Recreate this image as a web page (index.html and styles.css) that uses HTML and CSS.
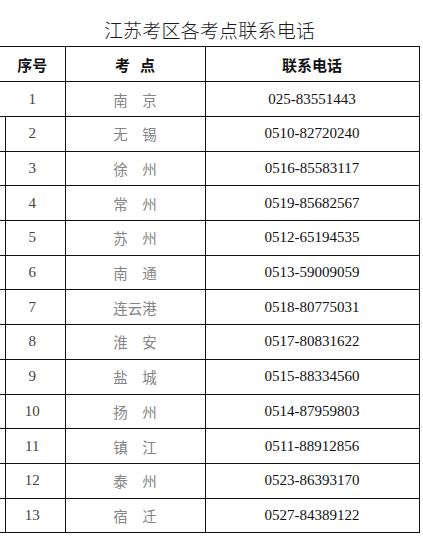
FILE: index.html
```html
<!DOCTYPE html>
<html lang="zh">
<head>
<meta charset="utf-8">
<title>江苏考区各考点联系电话</title>
<link rel="stylesheet" href="styles.css">
</head>
<body>
<div class="title">江苏考区各考点联系电话</div>
<table class="sheet">
  <colgroup><col class="c-no"><col class="c-site"><col class="c-tel"></colgroup>
  <thead>
    <tr class="head"><th>序号</th><th>考&nbsp;&nbsp;&nbsp;点</th><th>联系电话</th></tr>
  </thead>
  <tbody>
    <tr class="first"><td class="no">1</td><td class="site">南&emsp;京</td><td class="tel">025-83551443</td></tr>
    <tr><td class="no">2</td><td class="site">无&emsp;锡</td><td class="tel">0510-82720240</td></tr>
    <tr><td class="no">3</td><td class="site">徐&emsp;州</td><td class="tel">0516-85583117</td></tr>
    <tr><td class="no">4</td><td class="site">常&emsp;州</td><td class="tel">0519-85682567</td></tr>
    <tr><td class="no">5</td><td class="site">苏&emsp;州</td><td class="tel">0512-65194535</td></tr>
    <tr><td class="no">6</td><td class="site">南&emsp;通</td><td class="tel">0513-59009059</td></tr>
    <tr><td class="no">7</td><td class="site">连云港</td><td class="tel">0518-80775031</td></tr>
    <tr><td class="no">8</td><td class="site">淮&emsp;安</td><td class="tel">0517-80831622</td></tr>
    <tr><td class="no">9</td><td class="site">盐&emsp;城</td><td class="tel">0515-88334560</td></tr>
    <tr><td class="no">10</td><td class="site">扬&emsp;州</td><td class="tel">0514-87959803</td></tr>
    <tr><td class="no">11</td><td class="site">镇&emsp;江</td><td class="tel">0511-88912856</td></tr>
    <tr><td class="no">12</td><td class="site">泰&emsp;州</td><td class="tel">0523-86393170</td></tr>
    <tr><td class="no">13</td><td class="site">宿&emsp;迁</td><td class="tel">0527-84389122</td></tr>
  </tbody>
</table>
</body>
</html>
```
FILE: styles.css
```css
html, body {
  margin: 0;
  padding: 0;
  background: #ffffff;
}
body {
  width: 423px;
  font-family: "Liberation Serif", "Noto Sans CJK SC", serif;
}
.title {
  box-sizing: border-box;
  height: 46px;
  padding-top: 18px;
  width: 419px;
  text-align: center;
  font-family: "Noto Sans CJK SC", sans-serif;
  font-weight: 300;
  font-size: 19px;
  line-height: 24px;
  color: #1a1a1a;
  letter-spacing: 0.2px;
}
.sheet {
  border-collapse: collapse;
  table-layout: fixed;
  width: 419px;
  margin: 0;
}
.c-no { width: 65px; }
.c-site { width: 140px; }
.c-tel { width: 214px; }
.sheet th, .sheet td {
  border: 1px solid #111;
  padding: 0;
  text-align: center;
  vertical-align: middle;
}
.sheet th:first-child, .sheet td:first-child {
  border-left: none;
}
.head th {
  height: 34px;
  font-family: "Noto Sans CJK SC", sans-serif;
  font-weight: 700;
  font-size: 15px;
  color: #111;
}
.sheet td {
  height: 33.7px;
}
.sheet tr.first td {
  height: 34px;
}
.sheet tbody tr:not(.first) td.no {
  position: relative;
}
.sheet tbody tr:not(.first) td.no::before {
  content: "";
  position: absolute;
  left: 5px;
  top: -1px;
  bottom: -1px;
  width: 1px;
  background: #111;
}
.no {
  font-size: 15px;
  color: #444;
  padding-left: 2px;
}
.site {
  font-family: "Noto Sans CJK SC", sans-serif;
  font-weight: 400;
  font-size: 14.5px;
  color: #858585;
}
.tel {
  font-size: 15px;
  color: #111;
}
```
